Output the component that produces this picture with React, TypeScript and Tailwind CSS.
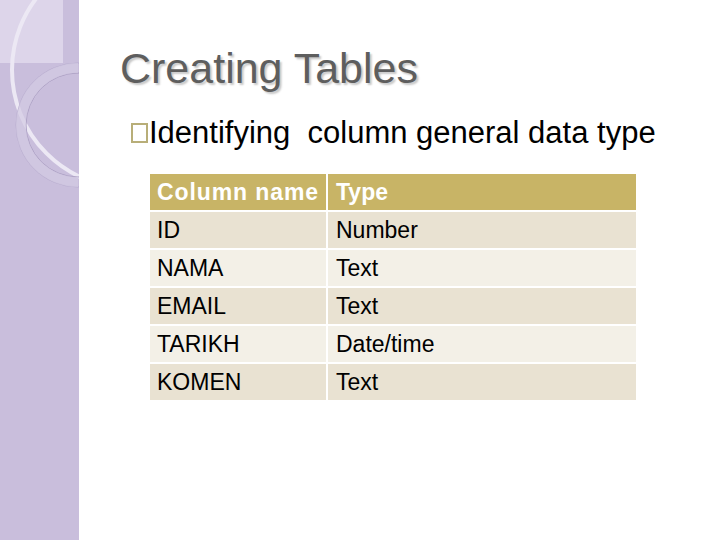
export default function App() {
  const rows = [["ID","Number"],["NAMA","Text"],["EMAIL","Text"],["TARIKH","Date/time"],["KOMEN","Text"]];
  return (
    <div className="w-[720px] h-[540px] bg-white flex overflow-hidden" style={{fontFamily:'"Liberation Sans", Arial, sans-serif'}}>
      <div className="relative w-[79px] h-full bg-[#c9bedc] shrink-0 overflow-hidden">
        <svg width="79" height="540" className="absolute left-0 top-0">
          <rect x="0" y="0" width="63" height="63" fill="#ddd5ea" />
          <circle cx="130" cy="70" r="118" fill="none" stroke="#ece8f4" strokeWidth="4" />
          <circle cx="78" cy="125" r="62" fill="none" stroke="#b9aed0" strokeWidth="1" />
          <circle cx="78" cy="125" r="52" fill="none" stroke="#ab9fc3" strokeWidth="1" />
          <path d="M78 73 A52 52 0 0 0 78 177 L78 187 A62 62 0 0 1 78 63 Z" fill="#d3cae2" opacity="0.7" />
        </svg>
      </div>
      <div className="flex-1 flex flex-col">
        <div className="pl-[41px] pt-[44px] text-[43px] leading-[48px] text-[#5e5e5e]" style={{textShadow:'2px 2px 2px #c8c8c8'}}>Creating Tables</div>
        <div className="pl-[52px] mt-[24px] text-[31px] leading-[34px] text-black flex items-center">
          <span className="inline-block w-[17px] h-[20px] border-2 border-[#b8ae78] mr-[1px]"></span>Identifying&nbsp; column general data type
        </div>
        <div className="ml-[71px] mt-[24px] w-[486px] flex flex-col gap-[2px] text-[23px]">
          <div className="flex h-[36px] bg-[#c8b466] text-white font-semibold">
            <div className="w-[176px] pl-[7px] flex items-center tracking-[0.9px]">Column name</div>
            <div className="flex-1 pl-[8px] flex items-center border-l-2 border-white">Type</div>
          </div>
          {rows.map((r,i)=>(
            <div key={i} className={`flex h-[36px] text-black ${i%2===0?'bg-[#e9e2d2]':'bg-[#f3f0e7]'}`}>
              <div className="w-[176px] pl-[7px] flex items-center">{r[0]}</div>
              <div className="flex-1 pl-[8px] flex items-center border-l-2 border-white">{r[1]}</div>
            </div>
          ))}
        </div>
      </div>
    </div>
  );
}
